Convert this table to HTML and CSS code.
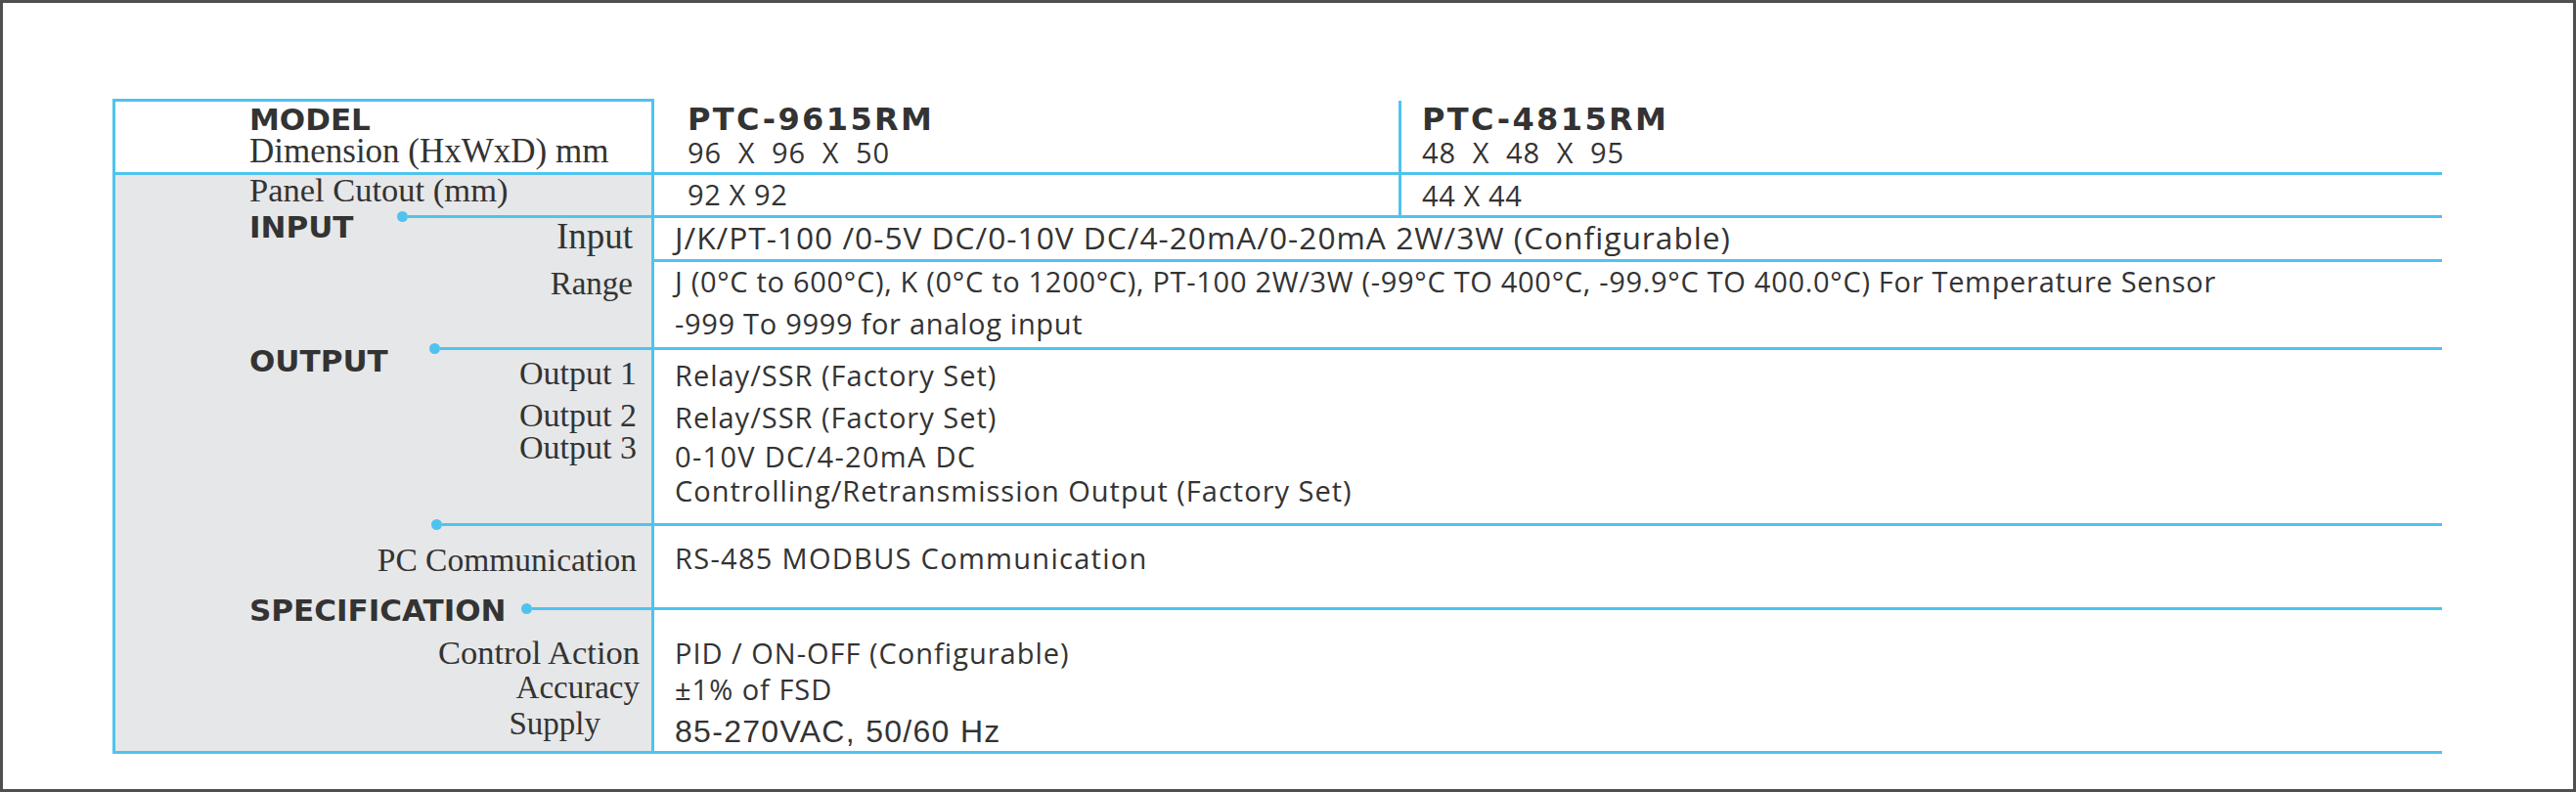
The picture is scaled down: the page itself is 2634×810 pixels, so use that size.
FILE: index.html
```html
<!DOCTYPE html>
<html lang="en">
<head>
<meta charset="utf-8">
<title>PTC-9615RM / PTC-4815RM Specification</title>
<link rel="stylesheet" href="styles.css">
</head>
<body>
<div class="page">
  <div class="spec">

    <div class="row row-a">
      <div class="lab lab-a">
        <div class="h h-model">MODEL</div>
        <div class="s s-dim">Dimension (HxWxD) mm</div>
      </div>
      <div class="val val-a split">
        <div class="sub sub-l">
          <div class="model">PTC-9615RM</div>
          <div class="dim">96 X 96 X 50</div>
        </div>
        <div class="sub sub-r">
          <div class="model">PTC-4815RM</div>
          <div class="dim">48 X 48 X 95</div>
        </div>
      </div>
    </div>

    <div class="row row-b">
      <div class="lab lab-b">
        <div class="s s-panel">Panel Cutout (mm)</div>
      </div>
      <div class="val split">
        <div class="sub sub-l"><div class="cut">92 X 92</div></div>
        <div class="sub sub-r"><div class="cut cut-r">44 X 44</div></div>
      </div>
    </div>

    <div class="row row-c">
      <div class="lab">
        <div class="lead">
          <span class="h h-input">INPUT</span>
          <i class="dot dot-input"></i>
          <span class="rule"></span>
        </div>
        <div class="s s-input">Input</div>
      </div>
      <div class="val val-c">
        <div class="t">J/K/PT-100 /0-5V DC/0-10V DC/4-20mA/0-20mA 2W/3W (Configurable)</div>
      </div>
    </div>

    <div class="row row-d">
      <div class="lab">
        <div class="s s-range">Range</div>
      </div>
      <div class="val val-d">
        <div class="t t-range">J (0°C to 600°C), K (0°C to 1200°C), PT-100 2W/3W (-99°C TO 400°C, -99.9°C TO 400.0°C) For Temperature Sensor</div>
        <div class="t t-range">-999 To 9999 for analog input</div>
      </div>
    </div>

    <div class="row row-e">
      <div class="lab">
        <div class="lead">
          <span class="h h-output">OUTPUT</span>
          <i class="dot dot-output"></i>
          <span class="rule"></span>
        </div>
        <div class="s s-out1">Output 1</div>
        <div class="s s-out2">Output 2</div>
        <div class="s s-out3">Output 3</div>
      </div>
      <div class="val val-e">
        <div class="t t-o1">Relay/SSR (Factory Set)</div>
        <div class="t t-o2">Relay/SSR (Factory Set)</div>
        <div class="t t-o3">0-10V DC/4-20mA DC</div>
        <div class="t t-o4">Controlling/Retransmission Output (Factory Set)</div>
      </div>
    </div>

    <div class="row row-f">
      <div class="lab">
        <div class="lead">
          <i class="dot dot-pc"></i>
          <span class="rule"></span>
        </div>
        <div class="s s-pc">PC Communication</div>
      </div>
      <div class="val val-f">
        <div class="t t-pc">RS-485 MODBUS Communication</div>
      </div>
    </div>

    <div class="row row-g">
      <div class="lab lab-g">
        <div class="lead">
          <span class="h h-spec">SPECIFICATION</span>
          <i class="dot dot-spec"></i>
          <span class="rule"></span>
        </div>
        <div class="s s-ctrl">Control Action</div>
        <div class="s s-acc">Accuracy</div>
        <div class="s s-sup">Supply</div>
      </div>
      <div class="val val-g">
        <div class="t t-pid">PID / ON-OFF (Configurable)</div>
        <div class="t t-acc">±1% of FSD</div>
        <div class="t t-sup">85-270VAC, 50/60 Hz</div>
      </div>
    </div>

  </div>
</div>
</body>
</html>
```

FILE: styles.css
```css
* { box-sizing: border-box; }

html, body {
  margin: 0;
  padding: 0;
  background: #ffffff;
}

.page {
  width: 2634px;
  height: 810px;
  border: 3px solid #4f4f4f;
  padding: 98px 0 0 112px;
  background: #ffffff;
  color: #333333;
}

.spec {
  width: 2382px;
}

.row {
  display: grid;
  grid-template-columns: 554px 1828px;
}

.row-a { height: 75px; }
.row-b { height: 44px; }
.row-c { height: 45px; }
.row-d { height: 90px; }
.row-e { height: 180px; }
.row-f { height: 86px; }
.row-g { height: 150px; }

/* label column */
.lab {
  border-left: 3px solid #4fc3ef;
  border-right: 3px solid #4fc3ef;
  background: #e6e7e8;
  padding-left: 137px;
}

.lab-a {
  background: #ffffff;
  border-top: 3px solid #4fc3ef;
  padding-top: 1px;
}

.lab-b {
  border-top: 3px solid #4fc3ef;
  padding-top: 2px;
}

.lab-g { border-bottom: 3px solid #4fc3ef; }

/* value column */
.val {
  border-top: 3px solid #4fc3ef;
  padding-left: 21px;
}

.val-a {
  border-top: 0;
}

.split {
  display: grid;
  grid-template-columns: 761px 1fr;
  padding-left: 0;
}

.sub-l { padding-left: 34px; }
.sub-r {
  border-left: 3px solid #4fc3ef;
  padding-left: 21px;
}

.row-a .sub { padding-top: 4px; }
.row-a .sub-r { margin-top: 2px; padding-top: 2px; }

.val-g { border-bottom: 3px solid #4fc3ef; }

/* bold section headings */
.h {
  font-family: "DejaVu Sans", "Liberation Sans", sans-serif;
  font-weight: bold;
  font-size: 31px;
  line-height: 34px;
  color: #333333;
  white-space: nowrap;
  display: block;
}

/* serif labels */
.s {
  font-family: "Liberation Serif", "DejaVu Serif", serif;
  font-size: 33px;
  line-height: 36px;
  color: #333333;
  white-space: nowrap;
}

.s-dim { font-size: 35px; line-height: 32px; }
.s-panel { font-size: 34.5px; line-height: 26px; }

.s-input {
  font-size: 37px;
  text-align: right;
  padding-right: 19px;
  margin-top: 4px;
}

.s-range {
  text-align: right;
  padding-right: 19px;
  padding-top: 7px;
}

.s-out1, .s-out2, .s-out3 {
  font-size: 34px;
  text-align: right;
  padding-right: 15px;
}
.s-out1 { margin-top: 9px; }
.s-out2 { margin-top: 7px; }
.s-out3 { margin-top: -3px; }

.s-pc {
  font-size: 33.5px;
  text-align: right;
  padding-right: 15px;
  margin-top: 20px;
}

.s-ctrl, .s-acc { text-align: right; padding-right: 12px; }
.s-ctrl { font-size: 34.5px; margin-top: 28px; }
.s-acc { margin-top: 0; }
.s-sup { text-align: right; padding-right: 52px; margin-top: 1px; }

/* section lead: heading + dot + rule */
.lead {
  display: flex;
  align-items: flex-start;
  height: 0;
}

.dot {
  flex: none;
  width: 11px;
  height: 11px;
  border-radius: 50%;
  background: #4fc3ef;
  margin-top: -4px;
}

.rule {
  flex: 1;
  height: 3px;
  background: #4fc3ef;
}

.h-input { margin-top: -2px; line-height: 28px; }
.dot-input { margin-left: 44px; }

.h-output { margin-top: -3px; }
.dot-output { margin-left: 42px; }

.dot-pc { margin-left: 186px; }

.h-spec { margin-top: -14px; }
.dot-spec { margin-left: 15px; }

/* model headers */
.model {
  font-family: "DejaVu Sans", "Liberation Sans", sans-serif;
  font-weight: bold;
  font-size: 32px;
  line-height: 34px;
  letter-spacing: 2.4px;
  color: #333333;
  white-space: nowrap;
}

.dim, .cut {
  font-family: "Open Sans", "DejaVu Sans", sans-serif;
  font-size: 29px;
  line-height: 30px;
  letter-spacing: 1px;
  color: #333333;
  white-space: nowrap;
}

.dim { margin-top: 2px; word-spacing: 8px; }
.cut { padding-top: 5px; letter-spacing: 0.6px; }
.cut-r { padding-top: 6px; }

/* value text */
.t {
  font-family: "Open Sans", "DejaVu Sans", sans-serif;
  font-size: 29px;
  line-height: 36px;
  letter-spacing: 1px;
  color: #333333;
  white-space: nowrap;
}

.val-c { padding-top: 3px; }
.val-c .t { font-size: 31.7px; line-height: 34px; }

.t-range { line-height: 43px; letter-spacing: 0.7px; }
.val-d .t-range:first-child { margin-top: -2px; }

.t-o1 { margin-top: 8px; }
.t-o2 { margin-top: 7px; }
.t-o3 { margin-top: 4px; letter-spacing: 1.3px; }
.t-o4 { margin-top: -1px; }

.t-pc { margin-top: 15px; letter-spacing: 1.3px; }

.t-pid { margin-top: 26px; }
.t-acc { margin-top: 1px; }
.t-sup {
  font-family: "Liberation Sans", Arial, sans-serif;
  font-size: 32px;
  letter-spacing: 1.3px;
  margin-top: 7px;
}
```
